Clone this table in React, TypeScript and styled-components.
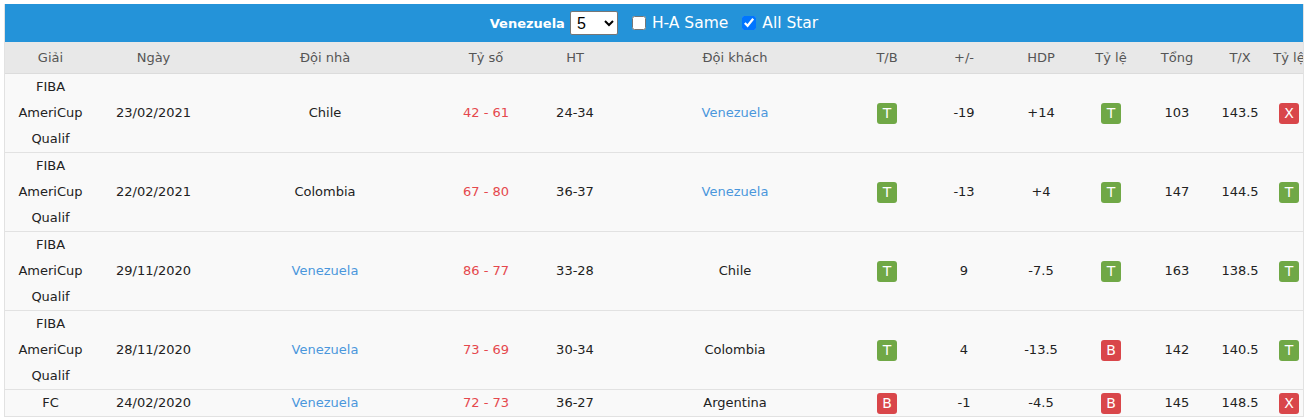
import React from 'react';
import styled, { createGlobalStyle } from 'styled-components';

const GlobalStyle = createGlobalStyle`
  html, body {
    margin: 0;
    padding: 0;
    background: #fff;
  }
  body {
    font-family: "DejaVu Sans", Verdana, sans-serif;
    font-size: 13px;
    color: #222;
  }
`;

const Wrapper = styled.div`
  margin: 4px 0 0 4px;
  width: 1300px;
  box-sizing: border-box;
  border-left: 1px solid #e2e2e2;
  border-right: 1px solid #e2e2e2;
  overflow: hidden;
`;

const TopBar = styled.div`
  height: 38px;
  background: #2493d9;
  display: flex;
  align-items: center;
  justify-content: center;
  gap: 14px;
  color: #fff;
`;

const TeamName = styled.span`
  font-weight: bold;
  font-size: 13px;
  margin-right: -9px;
`;

const CountSelect = styled.select`
  width: 48px;
  height: 24px;
  font-family: Arial, "Liberation Sans", sans-serif;
  font-size: 16px;
  background: #fff;
  color: #000;
  border: 1px solid #767676;
  border-radius: 2px;
  padding: 0 2px;
`;

const CheckLabel = styled.label`
  display: flex;
  align-items: center;
  gap: 6px;
  font-size: 15.5px;
  color: #fff;

  input {
    margin: 0;
    width: 14px;
    height: 14px;
    accent-color: #0075ff;
  }
`;

const Table = styled.table`
  width: 1300px;
  border-collapse: collapse;
  table-layout: fixed;
`;

const HeadCell = styled.th`
  height: 31px;
  padding: 0;
  background: #e8e8e8;
  color: #555;
  font-weight: normal;
  text-align: center;
  white-space: nowrap;
  border-bottom: 1px solid #dcdcdc;
`;

const Row = styled.tr`
  background: #f9f9f9;
`;

const Cell = styled.td<{ $tone?: 'score' | 'link' }>`
  padding: 0;
  line-height: 26px;
  text-align: center;
  vertical-align: middle;
  border-bottom: 1px solid #e2e2e2;
  color: ${(p) => (p.$tone === 'score' ? '#e5484d' : p.$tone === 'link' ? '#4a97dc' : '#222')};
`;

const Badge = styled.span<{ $win: boolean }>`
  display: inline-block;
  width: 20px;
  height: 21px;
  line-height: 21px;
  border-radius: 3px;
  color: #fff;
  font-size: 14px;
  vertical-align: middle;
  background: ${(p) => (p.$win ? '#70a846' : '#d9464a')};
`;

const widths = [91, 115, 228, 94, 84, 236, 68, 86, 68, 72, 60, 66, 32];
const heads = ['Giải', 'Ngày', 'Đội nhà', 'Tỷ số', 'HT', 'Đội khách', 'T/B', '+/-', 'HDP', 'Tỷ lệ', 'Tổng', 'T/X', 'Tỷ lệ'];

type Match = {
  league: string;
  date: string;
  home: string;
  score: string;
  ht: string;
  away: string;
  tb: string;
  diff: string;
  hdp: string;
  rate: string;
  total: string;
  tx: string;
  ou: string;
};

const TEAM = 'Venezuela';
const FIBA = 'FIBA AmeriCup Qualif';

const matches: Match[] = [
  { league: FIBA, date: '23/02/2021', home: 'Chile', score: '42 - 61', ht: '24-34', away: TEAM, tb: 'T', diff: '-19', hdp: '+14', rate: 'T', total: '103', tx: '143.5', ou: 'X' },
  { league: FIBA, date: '22/02/2021', home: 'Colombia', score: '67 - 80', ht: '36-37', away: TEAM, tb: 'T', diff: '-13', hdp: '+4', rate: 'T', total: '147', tx: '144.5', ou: 'T' },
  { league: FIBA, date: '29/11/2020', home: TEAM, score: '86 - 77', ht: '33-28', away: 'Chile', tb: 'T', diff: '9', hdp: '-7.5', rate: 'T', total: '163', tx: '138.5', ou: 'T' },
  { league: FIBA, date: '28/11/2020', home: TEAM, score: '73 - 69', ht: '30-34', away: 'Colombia', tb: 'T', diff: '4', hdp: '-13.5', rate: 'B', total: '142', tx: '140.5', ou: 'T' },
  { league: 'FC', date: '24/02/2020', home: TEAM, score: '72 - 73', ht: '36-27', away: 'Argentina', tb: 'B', diff: '-1', hdp: '-4.5', rate: 'B', total: '145', tx: '148.5', ou: 'X' },
];

const App = () => {
  return (
    <>
      <GlobalStyle />
      <Wrapper>
        <TopBar>
          <TeamName>Venezuela</TeamName>
          <CountSelect defaultValue="5">
            <option value="5">5</option>
            <option value="10">10</option>
            <option value="20">20</option>
          </CountSelect>
          <CheckLabel>
            <input type="checkbox" />
            H-A Same
          </CheckLabel>
          <CheckLabel>
            <input type="checkbox" defaultChecked />
            All Star
          </CheckLabel>
        </TopBar>
        <Table>
          <colgroup>
            {widths.map((w, i) => (
              <col key={i} style={{ width: w }} />
            ))}
          </colgroup>
          <thead>
            <tr>
              {heads.map((h, i) => (
                <HeadCell key={i}>{h}</HeadCell>
              ))}
            </tr>
          </thead>
          <tbody>
            {matches.map((m, i) => (
              <Row key={i}>
                <Cell>{m.league}</Cell>
                <Cell>{m.date}</Cell>
                <Cell $tone={m.home === TEAM ? 'link' : undefined}>{m.home}</Cell>
                <Cell $tone="score">{m.score}</Cell>
                <Cell>{m.ht}</Cell>
                <Cell $tone={m.away === TEAM ? 'link' : undefined}>{m.away}</Cell>
                <Cell>
                  <Badge $win={m.tb === 'T'}>{m.tb}</Badge>
                </Cell>
                <Cell>{m.diff}</Cell>
                <Cell>{m.hdp}</Cell>
                <Cell>
                  <Badge $win={m.rate === 'T'}>{m.rate}</Badge>
                </Cell>
                <Cell>{m.total}</Cell>
                <Cell>{m.tx}</Cell>
                <Cell>
                  <Badge $win={m.ou === 'T'}>{m.ou}</Badge>
                </Cell>
              </Row>
            ))}
          </tbody>
        </Table>
      </Wrapper>
    </>
  );
};

export default App;
